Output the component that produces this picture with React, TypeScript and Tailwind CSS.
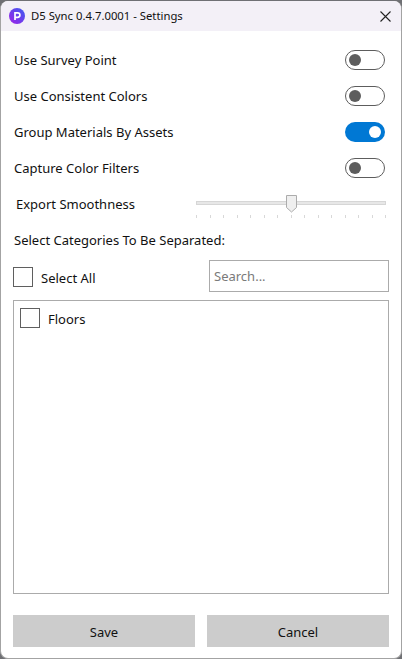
import * as React from "react"

const font = { fontFamily: '"Noto Sans", "Open Sans", sans-serif' }

function Toggle({ on }: { on?: boolean }) {
  if (on) {
    return (
      <div className="flex h-5 w-10 items-center justify-end rounded-full bg-[#0078d4] pr-[4px]">
        <div className="h-3 w-3 rounded-full bg-white" />
      </div>
    )
  }
  return (
    <div className="flex h-5 w-10 items-center rounded-full border border-[#5d5d5d] bg-white pl-[3px]">
      <div className="h-3 w-3 rounded-full bg-[#5d5d5d]" />
    </div>
  )
}

function ToggleRow({ label, on }: { label: string; on?: boolean }) {
  return (
    <div className="flex h-9 items-center justify-between pl-[13px] pr-[16px]">
      <span>{label}</span>
      <Toggle on={on} />
    </div>
  )
}

function Box() {
  return <div className="h-5 w-5 border border-[#5f5f5f] bg-white" />
}

export default function App() {
  return (
    <div className="h-[659px] w-[402px] overflow-hidden bg-[#6f7074]">
      <div
        className="mt-px flex h-[658px] w-[402px] flex-col overflow-hidden rounded-[8px] border-b border-r border-l border-[#a3a3a3] bg-white text-[13px] leading-[18px] text-[#111]"
        style={font}
      >
        {/* Title bar */}
        <div className="flex h-[30px] shrink-0 items-center bg-[#f3f0f7] pl-[8px] pr-[10px]">
          <svg width="16" height="16" viewBox="0 0 16 16">
            <defs>
              <linearGradient id="d5" x1="0" y1="1" x2="1" y2="0">
                <stop offset="0" stopColor="#a020e8" />
                <stop offset="1" stopColor="#3a5cf0" />
              </linearGradient>
            </defs>
            <circle cx="8" cy="8" r="8" fill="url(#d5)" />
            <path d="M6 12V4.8h2.6a2.3 2.3 0 0 1 0 4.6H6" fill="none" stroke="#fff" strokeWidth="1.7" />
          </svg>
          <span className="ml-[6px] flex-1 text-[11.3px]">D5 Sync 0.4.7.0001 - Settings</span>
          <svg width="11" height="11" viewBox="0 0 11 11" stroke="#222" strokeWidth="1.1">
            <path d="M.5.5l10 10M10.500.5l-10 10" />
          </svg>
        </div>

        <div className="flex flex-1 flex-col">
          <div className="pt-[11px]">
            <ToggleRow label="Use Survey Point" />
            <ToggleRow label="Use Consistent Colors" />
            <ToggleRow label="Group Materials By Assets" on />
            <ToggleRow label="Capture Color Filters" />
          </div>

          {/* Export smoothness */}
          <div className="mt-[6px] flex h-6 items-center pl-[15px]">
            <span className="w-[180px]">Export Smoothness</span>
            <div className="relative h-6 w-[190px]">
              <div className="mt-[9px] h-[4px] w-full border border-[#d6d6d6] bg-[#e7e7e7]" />
              <div className="mt-[10px] flex justify-between">
                {Array.from({ length: 15 }).map((_, i) => (
                  <div key={i} className="h-[3px] w-px bg-[#d8d8d8]" />
                ))}
              </div>
              <svg className="absolute left-[90px] top-[3px]" width="11" height="18" viewBox="0 0 11 18">
                <path d="M.5.5h10v12l-5 4.500-5-4.500z" fill="#efefef" stroke="#acacac" />
              </svg>
            </div>
          </div>

          <div className="mt-[14px] flex h-5 items-center pl-[13px]">Select Categories To Be Separated:</div>

          <div className="mt-[10px] flex h-8 items-center justify-between pl-[12px] pr-[12px]">
            <div className="mt-[2px] flex items-center gap-[8px]">
              <Box />
              <span className="mt-[2px]">Select All</span>
            </div>
            <div className="flex h-8 w-[180px] items-center border border-[#ababab] px-[4px] text-[#7a7a7a]">
              Search...
            </div>
          </div>

          <div className="mx-[12px] mt-2 h-[294px] border border-[#ababab] pl-[6px] pt-[7px]">
            <div className="flex items-center gap-[8px]">
              <Box />
              <span className="mt-[2px]">Floors</span>
            </div>
          </div>

          <div className="mt-[21px] flex gap-3 px-[12px]">
            <button className="h-8 flex-1 bg-[#cccccc] pt-[2px]">Save</button>
            <button className="h-8 flex-1 bg-[#cccccc] pt-[2px]">Cancel</button>
          </div>
        </div>
      </div>
    </div>
  )
}
